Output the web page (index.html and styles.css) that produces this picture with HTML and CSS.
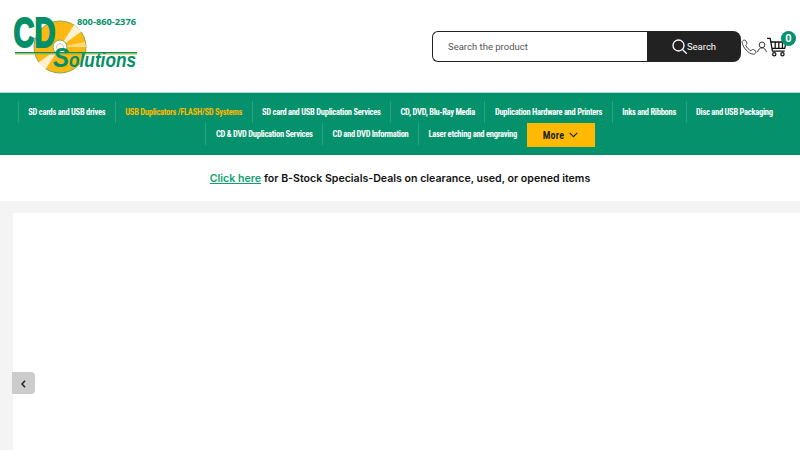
FILE: index.html
```html
<!DOCTYPE html>
<html lang="en">
<head>
    <meta charset="UTF-8">
    <meta name="viewport" content="width=device-width, initial-scale=1.0">
    <title>CD Solutions</title>
    <link rel="stylesheet" href="styles.css">
</head>
<body>

<header class="top">
    <a class="logo" href="#">
        <svg width="140" height="68" viewBox="0 -6 140 68">
            <circle cx="48" cy="32" r="26" fill="#fdb913" stroke="#8aa84a" stroke-width="1"/>
            <path d="M48 32 L62 10 L70 16 Z" fill="#fff" opacity=".8"/>
            <path d="M48 32 L26 48 L33 55 Z" fill="#fff" opacity=".8"/>
            <path d="M48 32 L73 27 L74 32 Z" fill="#fff3c4" opacity=".6"/>
            <circle cx="48" cy="32" r="7" fill="#fff" stroke="#8aa84a" stroke-width="1"/>
            <circle cx="48" cy="32" r="3.5" fill="#fff" stroke="#c9c9a0" stroke-width="1"/>
            <rect x="3" y="37" width="122" height="1.5" fill="#058f69"/>
            <rect x="3" y="38.5" width="122" height="1" fill="#b7b51f"/>
            <text class="logo-cd" x="1.5" y="32" textLength="42" lengthAdjust="spacingAndGlyphs">CD</text>
            <text class="logo-sol" x="41" y="52" textLength="83" lengthAdjust="spacingAndGlyphs"><tspan class="logo-s">S</tspan>olutions</text>
            <text class="logo-tel" x="65" y="10" textLength="59" lengthAdjust="spacingAndGlyphs">800-860-2376</text>
        </svg>
    </a>
    <div class="actions">
        <form class="search">
            <input class="search-input" type="text" placeholder="Search the product">
            <button class="search-btn" type="button">
                <svg width="15" height="15" viewBox="0 0 15 15" fill="none" stroke="#fff" stroke-width="1.3">
                    <circle cx="6.5" cy="6.5" r="5.5"/>
                    <path d="M10.5 10.5 L14.3 14.3" stroke-linecap="round"/>
                </svg>
                Search
            </button>
        </form>
        <a class="icon-link" href="#">
            <svg width="16" height="16" viewBox="0 0 16 16" fill="none" stroke="#444" stroke-width="1">
                <path d="M1 2.5 C2 1 3.5 .8 4.5 1.5 L6 4 C6.2 5 5 5.5 4.8 6.2 C5.5 8.5 8 11 10 11.6 C11 11.4 11.2 10.2 12.2 10.4 L15 12.4 C15.4 13.5 14.2 15 12.5 15.2 C7.5 15 1.5 8.5 1 2.5 Z"/>
            </svg>
        </a>
        <a class="icon-link" href="#">
            <svg width="10" height="12" viewBox="0 0 12 14" fill="none" stroke="#333" stroke-width="1.2">
                <circle cx="6" cy="4.5" r="3.4"/>
                <path d="M.7 13 C1.5 9.8 3.5 8 6 8 C8.5 8 10.5 9.8 11.3 13"/>
            </svg>
        </a>
        <a class="cart" href="#">
            <svg width="20" height="22" viewBox="0 0 22 22" fill="none" stroke="#111" stroke-width="1.4">
                <path d="M0 1.5 H3.5 L6 15.5 H19.5"/>
                <path d="M4.2 5.5 H21 L19.5 12.5 H5.4"/>
                <path d="M9 5.5 V12.5 M13 5.5 V12.5 M17 5.5 V12.5"/>
                <circle cx="8" cy="19" r="1.8"/>
                <circle cx="17" cy="19" r="1.8"/>
            </svg>
            <span class="cart-count">0</span>
        </a>
    </div>
</header>

<nav class="nav">
    <a class="nav-item" href="#">SD cards and USB drives</a>
    <a class="nav-item active" href="#">USB Duplicators /FLASH/SD Systems</a>
    <a class="nav-item" href="#">SD card and USB Duplication Services</a>
    <a class="nav-item" href="#">CD, DVD, Blu-Ray Media</a>
    <a class="nav-item" href="#">Duplication Hardware and Printers</a>
    <a class="nav-item" href="#">Inks and Ribbons</a>
    <a class="nav-item" href="#">Disc and USB Packaging</a>
    <a class="nav-item" href="#">CD &amp; DVD Duplication Services</a>
    <a class="nav-item" href="#">CD and DVD Information</a>
    <a class="nav-item" href="#">Laser etching and engraving</a>
    <a class="nav-more" href="#">
        More
        <svg width="9" height="6" viewBox="0 0 9 6" fill="none" stroke="#222" stroke-width="1.2">
            <path d="M.7 .8 L4.5 4.6 L8.3 .8"/>
        </svg>
    </a>
</nav>

<div class="notice">
    <a href="#">Click here</a> for B-Stock Specials-Deals on clearance, used, or opened items
</div>

<main class="content">
    <div class="slider"></div>
    <button class="prev" type="button">
        <svg width="5" height="8" viewBox="0 0 5 8" fill="none" stroke="#222" stroke-width="1.6">
            <path d="M4 .8 L1 4 L4 7.2"/>
        </svg>
    </button>
</main>

</body>
</html>
```

FILE: styles.css
```css
* {
    box-sizing: border-box;
}
html, body {
    height: 100%;
}
body {
    margin: 0;
    overflow: hidden;
    display: flex;
    flex-direction: column;
    font-family: Roboto, Arial, sans-serif;
    background-color: #fff;
}
a {
    text-decoration: none;
}
.top {
    height: 92px;
    flex: none;
    display: flex;
    justify-content: space-between;
    align-items: flex-start;
    padding: 9px 13px 0 12px;
}
.logo {
    display: block;
    width: 140px;
    height: 68px;
}
.logo-cd {
    font: 700 42px "Liberation Sans", Arial, sans-serif;
    fill: #058f69;
    stroke: #058f69;
    stroke-width: 2px;
}
.logo-sol {
    font: italic 700 20px "Liberation Sans", Arial, sans-serif;
    fill: #058f69;
}
.logo-s {
    font-size: 28px;
}
.logo-tel {
    font: 700 9.5px "Open Sans", Arial, sans-serif;
    fill: #058f69;
}
.actions {
    display: flex;
    align-items: center;
    margin-top: 22px;
}
.search {
    display: flex;
    width: 309px;
    height: 31px;
}
.search-input {
    flex: 1;
    min-width: 0;
    padding: 0 15px;
    border: 1px solid #222;
    border-right: none;
    border-radius: 6px 0 0 6px;
    font: 9.5px Roboto, Arial, sans-serif;
    outline: none;
}
.search-input::placeholder {
    color: #555;
}
.search-btn {
    width: 94px;
    display: flex;
    justify-content: center;
    align-items: center;
    padding: 0;
    border: none;
    border-radius: 0 8px 8px 0;
    background-color: #222;
    color: #fff;
    font: 9.5px Roboto, Arial, sans-serif;
}
.icon-link {
    display: flex;
}
.cart {
    position: relative;
    display: flex;
}
.cart-count {
    position: absolute;
    top: -5px;
    right: -9px;
    width: 15px;
    height: 15px;
    border-radius: 50%;
    background-color: #05916b;
    color: #fff;
    font: 700 11px/15px Roboto, Arial, sans-serif;
    text-align: center;
}
.nav {
    flex: none;
    height: 63px;
    display: flex;
    flex-wrap: wrap;
    justify-content: center;
    align-content: flex-start;
    padding: 8px 0 0;
    background-color: #05916b;
    border-top: 1px solid #a9d8c8;
}
.nav-item {
    height: 22px;
    padding: 0 9.5px;
    border-left: 1px solid #2ba184;
    color: #fff;
    font-family: Roboto, sans-serif;
    font-size: 8.5px;
    font-weight: 700;
    font-stretch: 75%;
    line-height: 22px;
    letter-spacing: -.28px;
    white-space: nowrap;
}
.nav-item.active {
    color: #ffb900;
}
.nav-more {
    width: 68px;
    height: 24px;
    display: flex;
    justify-content: center;
    align-items: center;
    gap: 5px;
    background-color: #ffb900;
    color: #222;
    font-family: Roboto, sans-serif;
    font-size: 10px;
    font-weight: 700;
    font-stretch: 75%;
    letter-spacing: .3px;
}
.notice {
    flex: none;
    height: 46px;
    display: flex;
    justify-content: center;
    align-items: center;
    gap: .28em;
    color: #111;
    font: 600 10.6px Inter, Roboto, sans-serif;
}
.notice a {
    color: #10a071;
    text-decoration: underline;
}
.content {
    position: relative;
    flex: 1;
    padding: 12px 0 0 13px;
    background-color: #f4f4f4;
}
.slider {
    height: 100%;
    background-color: #fff;
}
.prev {
    position: absolute;
    top: 171px;
    left: 12px;
    width: 23px;
    height: 22px;
    padding: 0;
    border: none;
    border-radius: 0 4px 4px 0;
    background-color: #ccc;
}
```
